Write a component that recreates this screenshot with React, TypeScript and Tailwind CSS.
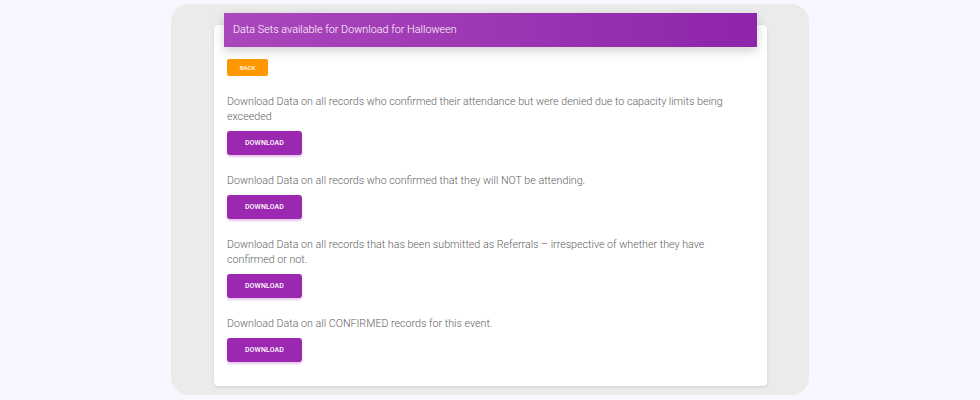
import React from 'react';

const ITEMS = [
  'Download Data on all records who confirmed their attendance but were denied due to capacity limits being exceeded',
  'Download Data on all records who confirmed that they will NOT be attending.',
  'Download Data on all records that has been submitted as Referrals – irrespective of whether they have confirmed or not.',
  'Download Data on all CONFIRMED records for this event.',
];

function DownloadButton() {
  return (
    <button className="mt-[7px] flex h-[24px] w-[75px] items-center justify-center rounded-[3px] bg-[#9c27b0] text-[7px] font-medium tracking-[0.02em] text-white shadow-[0_2px_2px_rgba(156,39,176,0.25)]">
      DOWNLOAD
    </button>
  );
}

export default function App() {
  return (
    <div className="min-h-[400px] w-full bg-[#f8f6fe] pt-[4px] font-['Roboto',sans-serif]">
      <div className="mx-auto w-[638px] rounded-[18px] bg-[#ebebeb] pb-[9px] pl-[43px] pr-[42px] pt-[21px]">
        <div className="flex flex-col rounded-[4px] bg-white pb-[24px] shadow-[0_1px_3px_rgba(0,0,0,0.12)]">
          <div className="mx-[10px] -mt-[12px] flex h-[34px] items-center bg-gradient-to-r from-[#ab47bc] to-[#8e24aa] px-[9px] text-[10.8px] font-light text-white shadow-[0_4px_10px_rgba(0,0,0,0.18)]">
            Data Sets available for Download for Halloween
          </div>
          <div className="px-[13px] pt-[12px]">
            <button className="flex h-[17px] w-[41px] items-center justify-center rounded-[2px] bg-[#ff9800] text-[6px] font-medium text-white">
              BACK
            </button>
            <div className="mt-[18px] flex flex-col gap-[18px]">
              {ITEMS.map((t) => (
                <div key={t}>
                  <p className="max-w-[520px] text-[10.7px] font-light leading-[15px] text-[#5f5f5f]">{t}</p>
                  <DownloadButton />
                </div>
              ))}
            </div>
          </div>
        </div>
      </div>
    </div>
  );
}
